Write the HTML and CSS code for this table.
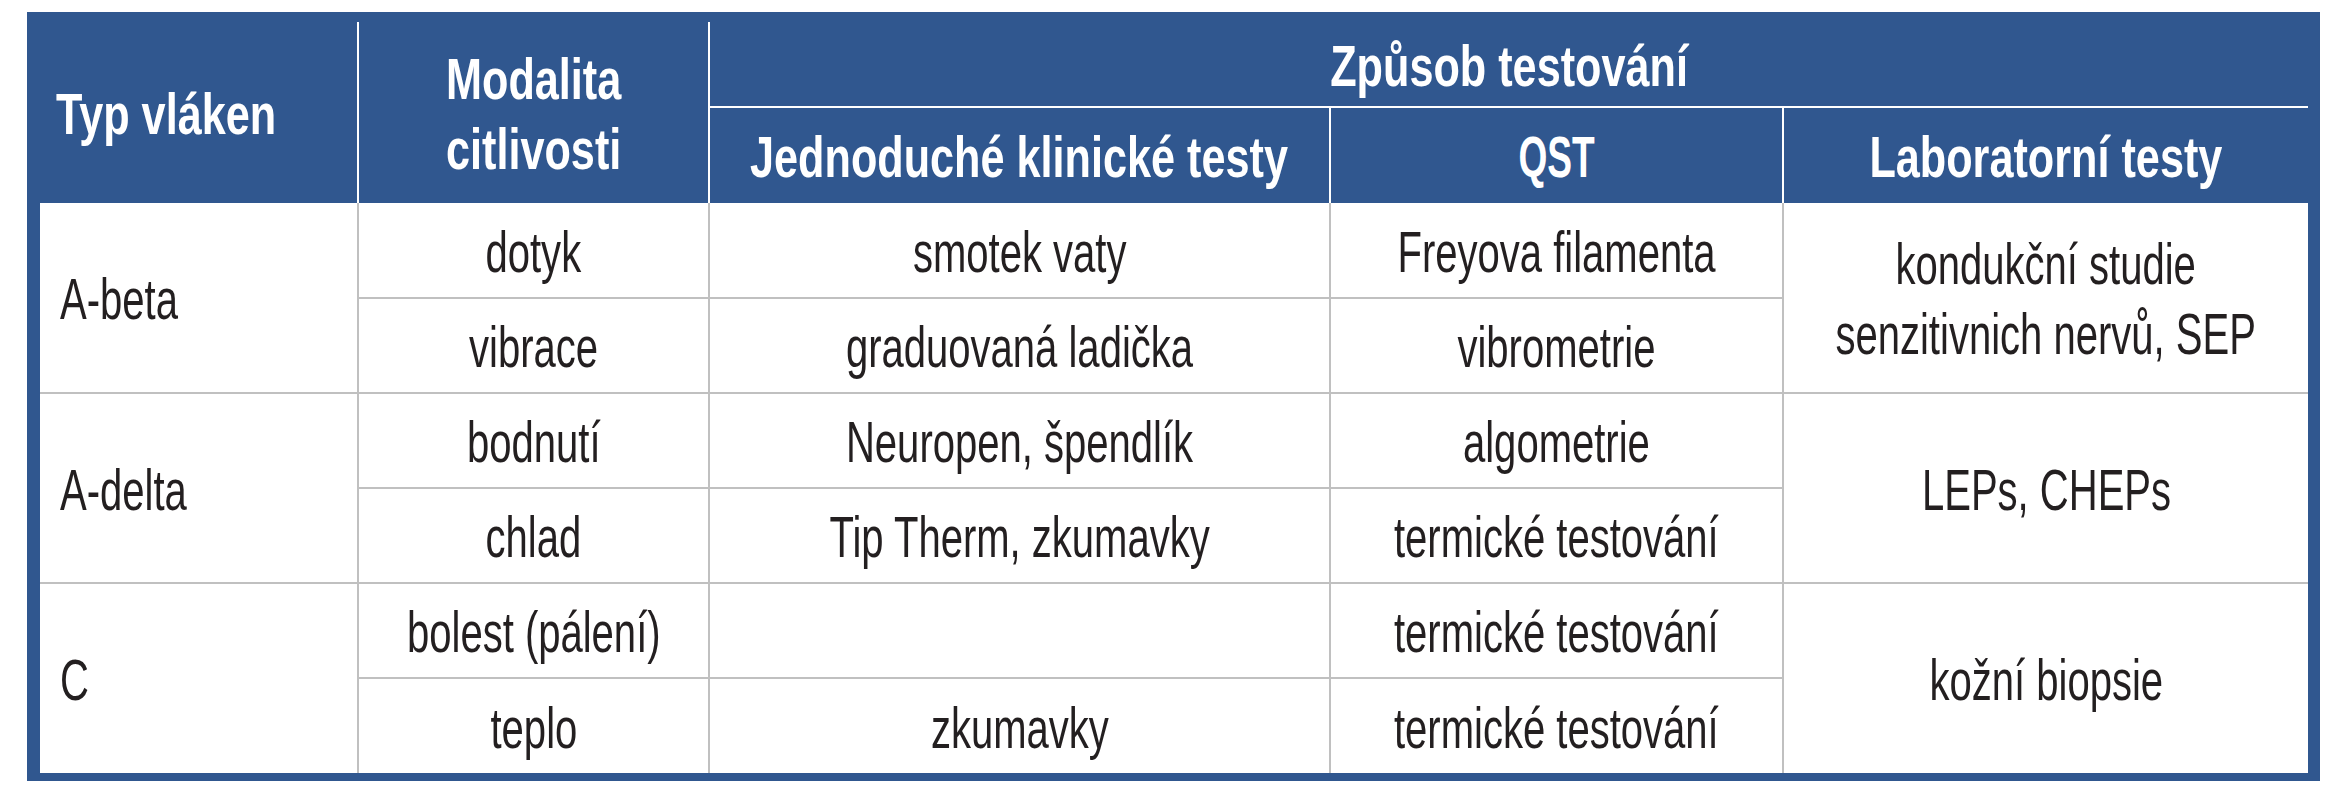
FILE: index.html
```html
<!DOCTYPE html>
<html lang="cs">
<head>
<meta charset="utf-8">
<title>Typ vláken</title>
<link rel="stylesheet" href="styles.css">
</head>
<body>
<div class="frame">
  <table class="tbl">
    <colgroup>
      <col class="c1"><col class="c2"><col class="c3"><col class="c4"><col class="c5">
    </colgroup>
    <thead>
      <tr class="h1">
        <th rowspan="2"><div class="cell start"><span class="t b start">Typ vláken</span></div></th>
        <th rowspan="2"><div class="cell"><span class="t b">Modalita<br>citlivosti</span></div></th>
        <th colspan="3" class="last group"><div class="cell"><span class="t b">Způsob testování</span></div></th>
      </tr>
      <tr class="h2">
        <th><div class="cell"><span class="t b">Jednoduché klinické testy</span></div></th>
        <th><div class="cell"><span class="t b q">QST</span></div></th>
        <th class="last"><div class="cell"><span class="t b">Laboratorní testy</span></div></th>
      </tr>
    </thead>
    <tbody>
      <tr>
        <td rowspan="2" class="first"><div class="cell start"><span class="t start">A-beta</span></div></td>
        <td><div class="cell"><span class="t">dotyk</span></div></td>
        <td><div class="cell"><span class="t">smotek vaty</span></div></td>
        <td><div class="cell"><span class="t">Freyova filamenta</span></div></td>
        <td rowspan="2" class="last"><div class="cell"><span class="t">kondukční studie<br>senzitivnich nervů, SEP</span></div></td>
      </tr>
      <tr>
        <td><div class="cell"><span class="t">vibrace</span></div></td>
        <td><div class="cell"><span class="t">graduovaná ladička</span></div></td>
        <td><div class="cell"><span class="t">vibrometrie</span></div></td>
      </tr>
      <tr>
        <td rowspan="2" class="first"><div class="cell start"><span class="t start">A-delta</span></div></td>
        <td><div class="cell"><span class="t">bodnutí</span></div></td>
        <td><div class="cell"><span class="t">Neuropen, špendlík</span></div></td>
        <td><div class="cell"><span class="t">algometrie</span></div></td>
        <td rowspan="2" class="last"><div class="cell"><span class="t">LEPs, CHEPs</span></div></td>
      </tr>
      <tr>
        <td><div class="cell"><span class="t">chlad</span></div></td>
        <td><div class="cell"><span class="t">Tip Therm, zkumavky</span></div></td>
        <td><div class="cell"><span class="t">termické testování</span></div></td>
      </tr>
      <tr>
        <td rowspan="2" class="first bottom"><div class="cell start"><span class="t start">C</span></div></td>
        <td><div class="cell"><span class="t">bolest (pálení)</span></div></td>
        <td><div class="cell"><span class="t"></span></div></td>
        <td><div class="cell"><span class="t">termické testování</span></div></td>
        <td rowspan="2" class="last bottom"><div class="cell"><span class="t">kožní biopsie</span></div></td>
      </tr>
      <tr class="end">
        <td><div class="cell"><span class="t">teplo</span></div></td>
        <td><div class="cell"><span class="t">zkumavky</span></div></td>
        <td><div class="cell"><span class="t">termické testování</span></div></td>
      </tr>
    </tbody>
  </table>
</div>
</body>
</html>
```

FILE: styles.css
```css
html, body {
  margin: 0;
  padding: 0;
  background: #ffffff;
}

body {
  font-family: "Liberation Sans", Arial, sans-serif;
  font-size: 58px;
  line-height: 1.2;
  color: #231f20;
}

.frame {
  display: inline-block;
  margin: 12px 0 0 27px;
  padding: 10px 12px 8px 13px;
  background: #30578f;
}

.tbl {
  border-collapse: collapse;
  table-layout: fixed;
  width: 2268px;
  border: 0;
}

.c1 { width: 318px; }
.c2 { width: 351px; }
.c3 { width: 621px; }
.c4 { width: 453px; }
.c5 { width: 525px; }

th, td {
  padding: 0;
  vertical-align: middle;
  overflow: visible;
}

th {
  background: #30578f;
  color: #ffffff;
  font-weight: bold;
  border-right: 2px solid #ffffff;
}

th.last { border-right: 0; }
th.group { border-bottom: 2px solid #ffffff; }

.h1 { height: 85px; }
.h2 { height: 96px; }

tbody tr { height: 95px; }

td {
  background: #ffffff;
  border-right: 2px solid #c0c0c0;
  border-bottom: 2px solid #c0c0c0;
}

td.last { border-right: 0; }
tr.end td, td.bottom { border-bottom: 0; }

.cell {
  display: flex;
  justify-content: center;
  align-items: center;
  padding-top: 3px;
}

.cell.start {
  justify-content: flex-start;
  padding-left: 20px;
}

th .cell.start { padding-left: 16px; }

.t {
  display: inline-block;
  white-space: nowrap;
  text-align: center;
  transform: scaleX(0.69);
  transform-origin: center;
}

.t.b { transform: scaleX(0.745); }
.t.q { transform: scaleX(0.64); }

.t.start {
  text-align: left;
  transform-origin: left center;
}
```
